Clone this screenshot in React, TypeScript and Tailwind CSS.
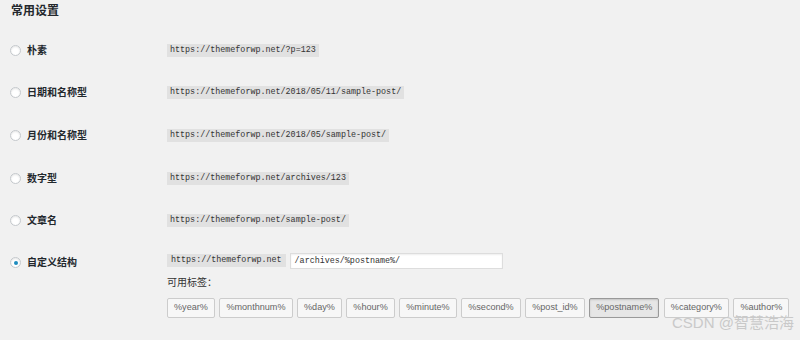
import React from 'react';

type Option = { label: string; url: string };

const options: Option[] = [
  { label: '朴素', url: 'https://themeforwp.net/?p=123' },
  { label: '日期和名称型', url: 'https://themeforwp.net/2018/05/11/sample-post/' },
  { label: '月份和名称型', url: 'https://themeforwp.net/2018/05/sample-post/' },
  { label: '数字型', url: 'https://themeforwp.net/archives/123' },
  { label: '文章名', url: 'https://themeforwp.net/sample-post/' },
];

const tags = ['%year%', '%monthnum%', '%day%', '%hour%', '%minute%', '%second%', '%post_id%', '%postname%', '%category%', '%author%'];

const cjk = "font-['Liberation_Sans','Noto_Sans_CJK_SC',sans-serif]";
const mono = "font-['Liberation_Mono','DejaVu_Sans_Mono',monospace]";

function Radio({ checked }: { checked?: boolean }) {
  return (
    <span className="w-[11px] h-[11px] rounded-full bg-white border border-[#c4c8cc] shadow-[inset_0_1px_2px_rgba(0,0,0,0.1)] flex items-center justify-center shrink-0">
      {checked && <span className="w-[4px] h-[4px] rounded-full bg-[#1e8cbe]" />}
    </span>
  );
}

export default function App() {
  return (
    <div className={`w-[800px] h-[340px] bg-[#f1f1f1] relative overflow-hidden text-[#23282d] ${cjk}`}>
      <div className="h-[29px] pl-[11px] pt-[4px]">
        <h2 className="text-[12px] leading-[14px] font-bold">常用设置</h2>
      </div>
      {options.map(opt => (
        <div key={opt.label} className="h-[42.6px] flex items-center">
          <div className="w-[167px] shrink-0 pl-[10px] flex items-center gap-[6px]">
            <Radio />
            <span className="text-[10px] font-bold">{opt.label}</span>
          </div>
          <code className={`${mono} text-[8.4px] leading-[13px] bg-[#e1e1e1] text-[#333] px-[3px]`}>{opt.url}</code>
        </div>
      ))}
      <div className="flex pt-[11px]">
        <div className="w-[167px] shrink-0 pl-[10px] h-[16px] mt-[2px] flex items-center gap-[6px]">
          <Radio checked />
          <span className="text-[10px] font-bold">自定义结构</span>
        </div>
        <div className="flex flex-col">
          <div className="flex items-center gap-[4px]">
            <code className={`${mono} text-[8.4px] leading-[13px] bg-[#e1e1e1] text-[#333] px-[4px]`}>https://themeforwp.net</code>
            <div className={`${mono} w-[213px] h-[16px] bg-white border border-[#ddd] shadow-[inset_0_1px_2px_rgba(0,0,0,0.07)] text-[8.4px] leading-[14px] pl-[4px] text-[#333]`}>/archives/%postname%/</div>
          </div>
          <div className="text-[10px] leading-[12px] mt-[8px] text-[#333]">可用标签：</div>
          <div className="flex gap-[4.5px] mt-[9px]">
            {tags.map(tag => (
              <span
                key={tag}
                className={`h-[20px] px-[6px] flex items-center text-[9.1px] text-[#666] border rounded-[2px] ${tag === '%postname%' ? 'bg-[#e6e6e6] border-[#999] shadow-[inset_0_1px_2px_rgba(0,0,0,0.15)]' : 'bg-[#f7f7f7] border-[#ccc]'}`}
              >
                {tag}
              </span>
            ))}
          </div>
        </div>
      </div>
      <div className={`absolute left-[672px] top-[314px] text-[15px] leading-[18px] text-[#c9c9c9] ${cjk}`}>CSDN @智慧浩海</div>
    </div>
  );
}
